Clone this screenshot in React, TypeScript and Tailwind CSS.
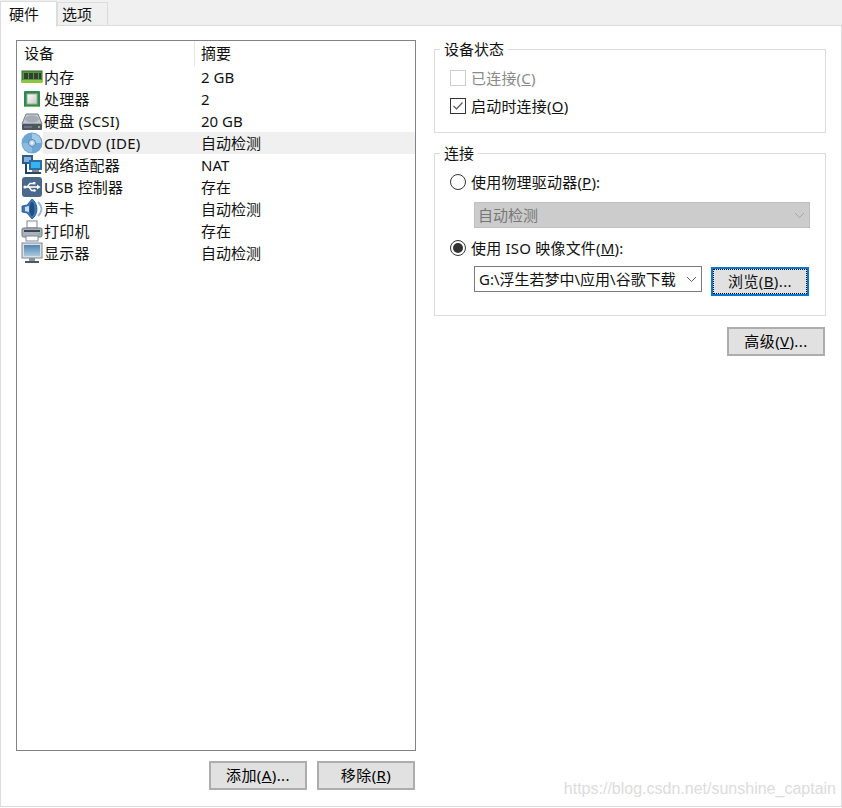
import React from "react";

const Ram = () => (
  <svg width="22" height="22" viewBox="0 0 22 22">
    <rect x="1" y="5" width="20" height="11" fill="#4f9a3c" stroke="#2f6b2a" strokeWidth="1" />
    <rect x="1" y="14" width="20" height="3" fill="#8cc63f" />
    <rect x="3" y="7" width="4" height="6" fill="#3a3a34" />
    <rect x="8" y="7" width="4" height="6" fill="#3a3a34" />
    <rect x="13" y="7" width="4" height="6" fill="#3a3a34" />
    <rect x="18" y="7" width="2" height="6" fill="#3a3a34" />
  </svg>
);
const Cpu = () => (
  <svg width="22" height="22" viewBox="0 0 22 22">
    <defs>
      <linearGradient id="cpuG" x1="0" y1="0" x2="1" y2="1">
        <stop offset="0" stopColor="#ffffff" />
        <stop offset="1" stopColor="#c4c8bc" />
      </linearGradient>
    </defs>
    <rect x="3" y="3" width="16" height="16" rx="1" fill="#2c8a50" />
    <rect x="6" y="6" width="10" height="10" fill="url(#cpuG)" stroke="#a9ad9f" strokeWidth="1" />
    <rect x="4" y="18" width="14" height="1" fill="#7fbf6a" />
  </svg>
);
const Disk = () => (
  <svg width="22" height="22" viewBox="0 0 22 22">
    <path d="M5 4h12l4 10H1z" fill="#c4c8cf" stroke="#77808c" strokeWidth="1" />
    <ellipse cx="11" cy="9" rx="7" ry="3.5" fill="#a5acb6" />
    <rect x="1" y="14" width="20" height="6" rx="1" fill="#4d5662" />
    <circle cx="18" cy="17" r="1" fill="#8fe07e" />
    <rect x="3" y="16.5" width="8" height="1" fill="#88909c" />
  </svg>
);
const Cd = () => (
  <svg width="22" height="22" viewBox="0 0 22 22">
    <circle cx="11" cy="11" r="10.5" fill="#6fa5d3" />
    <path d="M11 1.500a9.500 9.500 0 0 1 9.500 9.500h-6a3.500 3.500 0 0 0-3.500-3.500z" fill="#a4cae8" />
    <path d="M11 20.500a9.500 9.500 0 0 1-9.500-9.500h6a3.500 3.500 0 0 0 3.500 3.500z" fill="#8dbbe0" />
    <circle cx="11" cy="11" r="3.500" fill="#bcd8ee" stroke="#5487b5" strokeWidth="1" />
    <circle cx="11" cy="11" r="1.200" fill="#eef6fc" />
  </svg>
);
const Net = () => (
  <svg width="22" height="22" viewBox="0 0 22 22">
    <rect x="1" y="1" width="11" height="9" fill="#2f5c86" />
    <rect x="3" y="3" width="7" height="5" fill="#7fb3dc" />
    <path d="M5 10v9h7" stroke="#1f4468" strokeWidth="2" fill="none" />
    <rect x="8" y="6" width="13" height="10" fill="#2e6da4" />
    <rect x="10" y="8" width="9" height="6" fill="#35b4ee" />
    <rect x="11" y="16" width="7" height="2" fill="#7d8a96" />
    <rect x="9" y="18" width="11" height="2" fill="#33475b" />
  </svg>
);
const Usb = () => (
  <svg width="22" height="22" viewBox="0 0 22 22">
    <rect x="1" y="1" width="20" height="20" rx="3" fill="#49688a" />
    <path d="M3 11h14" stroke="#fff" strokeWidth="1.600" />
    <path d="M16 8.500l3.500 2.500-3.500 2.500z" fill="#fff" />
    <path d="M6 11l3-3.500h3M8 11l2.500 3.500H13" stroke="#fff" strokeWidth="1.300" fill="none" />
    <rect x="12" y="6" width="2.400" height="2.400" fill="#fff" />
    <circle cx="13.500" cy="14.500" r="1.300" fill="#fff" />
    <circle cx="4" cy="11" r="1.600" fill="#fff" />
  </svg>
);
const Sound = () => (
  <svg width="22" height="22" viewBox="0 0 22 22">
    <path d="M1 8l5-1 5-6c3 2 5 6 5 10s-2 8-5 10l-5-6-5-1z" fill="#3f78b5" stroke="#24527f" strokeWidth="0.800" />
    <ellipse cx="11" cy="11" rx="2.500" ry="7" fill="#1f4f86" />
    <path d="M4 9l4-1v6l-4-1z" fill="#c9e0f4" />
    <path d="M17 4c2 2 3.500 4.500 3.500 7s-1.500 5-3.500 7" stroke="#8fbbe2" strokeWidth="1.800" fill="none" />
  </svg>
);
const Printer = () => (
  <svg width="22" height="22" viewBox="0 0 22 22">
    <rect x="6" y="1" width="10" height="7" fill="#fff" stroke="#7c8794" strokeWidth="1" />
    <rect x="1" y="8" width="20" height="9" rx="1.500" fill="#aab2bc" stroke="#6b7581" strokeWidth="1" />
    <rect x="3" y="10" width="16" height="2" fill="#3e4650" />
    <circle cx="18.500" cy="14" r="1" fill="#5fd05a" />
    <rect x="5" y="16" width="12" height="5" fill="#fff" stroke="#7c8794" strokeWidth="1" />
  </svg>
);
const Monitor = () => (
  <svg width="22" height="22" viewBox="0 0 22 22">
    <defs>
      <linearGradient id="monG" x1="0" y1="0" x2="0" y2="1">
        <stop offset="0" stopColor="#4f86b0" />
        <stop offset="1" stopColor="#a8c8dd" />
      </linearGradient>
    </defs>
    <rect x="1" y="1" width="20" height="15" fill="#d9dfe5" stroke="#7d8894" strokeWidth="1" />
    <rect x="3" y="3" width="16" height="11" fill="url(#monG)" />
    <rect x="8" y="16" width="6" height="3" fill="#8a949f" />
    <rect x="4" y="19" width="14" height="2" fill="#4f5965" />
  </svg>
);

const rows: [React.FC, string, string][] = [
  [Ram, "内存", "2 GB"],
  [Cpu, "处理器", "2"],
  [Disk, "硬盘 (SCSI)", "20 GB"],
  [Cd, "CD/DVD (IDE)", "自动检测"],
  [Net, "网络适配器", "NAT"],
  [Usb, "USB 控制器", "存在"],
  [Sound, "声卡", "自动检测"],
  [Printer, "打印机", "存在"],
  [Monitor, "显示器", "自动检测"],
];

const Chevron = ({ color }: { color: string }) => (
  <svg width="11" height="7" viewBox="0 0 11 7">
    <path d="M1 1l4.500 4.500L10 1" fill="none" stroke={color} strokeWidth="1" />
  </svg>
);

const Btn = ({ children }: { children: React.ReactNode }) => (
  <button className="w-[98px] h-[29px] bg-[#e1e1e1] border-2 border-[#adadad] flex items-center justify-center text-[15px] text-black tracking-[0.4px]">
    {children}
  </button>
);

export default function App() {
  return (
    <div
      className="w-[842px] h-[808px] bg-white flex flex-col text-[15px] text-[#111] overflow-hidden relative"
      style={{ fontFamily: '"Noto Sans", "Noto Sans CJK SC", sans-serif' }}
    >
      <div className="h-[25px] bg-[#f0f0f0] flex items-start shrink-0 relative z-10">
        <div className="w-[57px] h-[26px] mt-px bg-white border-t border-l border-r border-[#dcdcdc] flex items-center pl-[8px] leading-none">硬件</div>
        <div className="w-[51px] h-[23px] mt-[2px] border-t border-r border-l border-[#dcdcdc] flex items-center pl-[4px] leading-none">选项</div>
      </div>
      <div className="h-[782px] border border-[#dcdcdc] flex pl-[15px] pt-[14px] shrink-0">
        <div className="w-[400px] flex flex-col">
          <div className="h-[711px] border border-[#82828f] pl-px flex flex-col">
            <div className="h-[25px] flex items-center shrink-0">
              <div className="w-[177px] h-full flex items-center pl-[6px] border-r border-[#e5e5e5]">设备</div>
              <div className="pl-[6px]">摘要</div>
            </div>
            {rows.map(([Icon, name, val], i) => (
              <div key={name} className="h-[22px] flex items-center">
                <div className="w-[25px] h-[22px] pl-[3px] flex items-center shrink-0">
                  <Icon />
                </div>
                <div className={`flex-1 h-[22px] flex items-center ${i === 3 ? "bg-[#f0f0f0]" : ""}`}>
                  <div className="w-[158px] pl-px leading-none tracking-[0.2px]">{name}</div>
                  <div className="leading-none">{val}</div>
                </div>
              </div>
            ))}
          </div>
          <div className="flex justify-end gap-[10px] mt-[10px] pr-px">
            <Btn>添加(<u>A</u>)...</Btn>
            <Btn>移除(<u>R</u>)</Btn>
          </div>
        </div>
        <div className="w-[392px] ml-[18px] flex flex-col">
          <fieldset className="border border-[#dcdcdc] h-[94px] -mt-px pl-[15px] flex flex-col">
            <legend className="-ml-[10px] px-[4px] leading-[20px]">设备状态</legend>
            <label className="flex items-center h-[28px] mt-[5px] text-[#8a8a8a] tracking-[0.2px]">
              <span className="w-[16px] h-[16px] border border-[#cfcfcf] mr-[5px]" />
              已连接(<u>C</u>)
            </label>
            <label className="flex items-center h-[28px] text-[#111] tracking-[0.2px]">
              <span className="w-[16px] h-[16px] border border-[#333] mr-[5px] flex items-center justify-center">
                <svg width="12" height="10" viewBox="0 0 12 10">
                  <path d="M1.500 5l3 3 6-6.500" fill="none" stroke="#555" strokeWidth="1.200" />
                </svg>
              </span>
              启动时连接(<u>O</u>)
            </label>
          </fieldset>
          <fieldset className="border border-[#dcdcdc] h-[173px] mt-[10px] pl-[15px] pr-[15px] flex flex-col">
            <legend className="-ml-[10px] px-[4px] leading-[20px]">连接</legend>
            <label className="flex items-center h-[28px] mt-[5px] tracking-[0.2px]">
              <span className="w-[16px] h-[16px] rounded-full border border-[#333] mr-[5px]" />
              使用物理驱动器(<u>P</u>):
            </label>
            <div className="ml-[24px] mt-[6px] h-[26px] bg-[#cccccc] border border-[#bfbfbf] flex items-center justify-between pl-[3px] pr-[4px] text-[#777]">
              自动检测
              <Chevron color="#a5a5a5" />
            </div>
            <label className="flex items-center h-[28px] mt-[6px] tracking-[0.2px]">
              <span className="w-[16px] h-[16px] rounded-full border border-[#333] mr-[5px] flex items-center justify-center">
                <span className="w-[10px] h-[10px] rounded-full bg-[#333]" />
              </span>
              使用 ISO 映像文件(<u>M</u>):
            </label>
            <div className="flex items-start mt-[4px]">
              <div className="ml-[24px] w-[228px] h-[26px] border border-[#7a7a7a] flex items-center justify-between pl-[4px] pr-[4px] overflow-hidden whitespace-nowrap">
                <span className="w-[200px] overflow-hidden">G:\浮生若梦中\应用\谷歌下载</span>
                <Chevron color="#606060" />
              </div>
              <button className="ml-[9px] mt-px w-[98px] h-[29px] bg-[#e1e1e1] border-2 border-[#0078d7] outline-1 outline-dotted outline-offset-[-3px] outline-black flex items-center justify-center text-[#111] tracking-[0.4px]">
                浏览(<u>B</u>)...
              </button>
            </div>
          </fieldset>
          <div className="flex justify-end mt-[11px] pr-px">
            <Btn>高级(<u>V</u>)...</Btn>
          </div>
        </div>
      </div>
      <div className="absolute right-[6px] bottom-[11px] text-[#dcdcdc] text-[16px] leading-none" style={{ fontFamily: '"Liberation Sans", sans-serif' }}>
        https://blog.csdn.net/sunshine_captain
      </div>
    </div>
  );
}
